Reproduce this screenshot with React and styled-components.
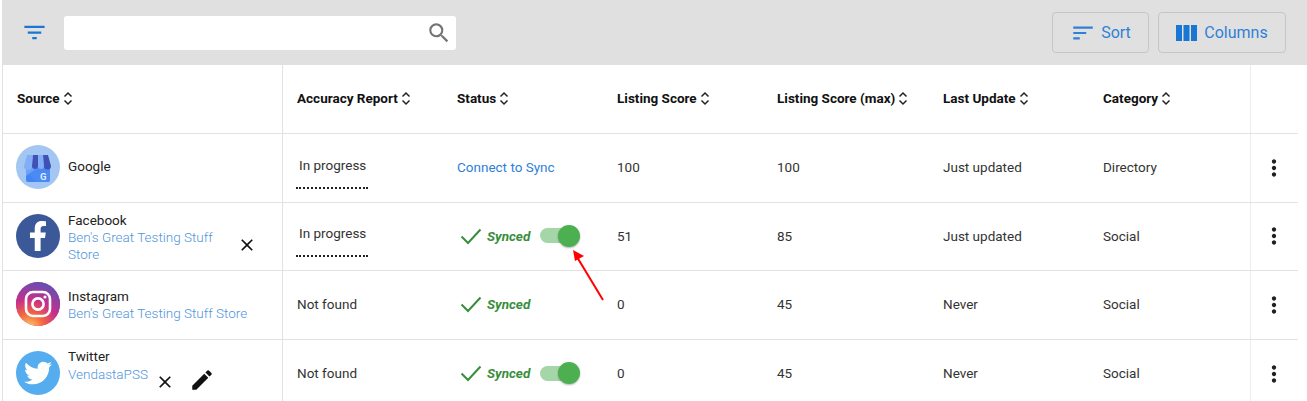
import React from "react";
import styled, { createGlobalStyle } from "styled-components";
import { MdFilterList, MdSearch, MdSort, MdClose, MdEdit, MdMoreVert } from "react-icons/md";
import { FaFacebookF, FaTwitter } from "react-icons/fa";

const GlobalStyle = createGlobalStyle`
  html, body {
    margin: 0;
    background: #fff;
    font-family: Roboto, "Liberation Sans", sans-serif;
    overflow: hidden;
  }
`;

const Page = styled.div`
  position: relative;
  width: 1307px;
  height: 401px;
  overflow: hidden;
  padding-left: 2px;
  box-sizing: border-box;
`;

const Toolbar = styled.div`
  height: 65px;
  background: #e0e0e0;
  display: flex;
  align-items: center;
  padding: 0 21px 0 19px;
  box-sizing: border-box;
`;

const FilterButton = styled.div`
  display: flex;
  color: #1976d2;
  font-size: 27px;
  margin-right: 16px;
`;

const SearchBox = styled.div`
  width: 392px;
  height: 34px;
  margin-top: 1px;
  background: #fff;
  border-radius: 3px;
  display: flex;
  align-items: center;
  justify-content: flex-end;
  padding-right: 4px;
  box-sizing: border-box;
  color: #757575;
  font-size: 26px;
`;

const Spacer = styled.div`
  flex: 1;
`;

const ToolButton = styled.div`
  height: 41px;
  width: ${(p) => p.$width}px;
  margin-left: 9px;
  border: 1px solid #c6c6c6;
  border-radius: 4px;
  box-sizing: border-box;
  display: flex;
  align-items: center;
  justify-content: center;
  gap: ${(p) => p.$gap}px;
  color: #2f80d8;
  font-size: 16px;
  svg {
    flex: none;
  }
`;

const Table = styled.div`
  width: 1295px;
  border-left: 1px solid #e2e2e2;
`;

const Row = styled.div`
  display: grid;
  grid-template-columns: 280px 160px 160px 160px 166px 160px 161px 47px;
  height: ${(p) => p.$height}px;
  border-bottom: 1px solid #e2e2e2;
  box-sizing: border-box;
`;

const Cell = styled.div`
  display: flex;
  align-items: center;
  padding: 0 0 2px 14px;
  font-size: 13.5px;
  color: #333;
  min-width: 0;
`;

const HeadCell = styled(Cell)`
  font-weight: 700;
  color: #111;
  gap: 3px;
`;

const SourceCell = styled(Cell)`
  border-right: 1px solid #e2e2e2;
  padding-left: 13px;
  position: relative;
`;

const HeadSourceCell = styled(HeadCell)`
  border-right: 1px solid #e2e2e2;
`;

const ActionCell = styled.div`
  border-left: 1px solid #ececec;
  display: flex;
  align-items: center;
  padding: 0 0 1px 10px;
  font-size: 26px;
  color: #212121;
`;

const Avatar = styled.div`
  width: 44px;
  height: 44px;
  flex: none;
  border-radius: 50%;
  overflow: hidden;
  display: flex;
  align-items: center;
  justify-content: center;
  background: ${(p) => p.$bg};
  color: #fff;
  margin-right: 8px;
`;

const SourceText = styled.div`
  width: ${(p) => p.$width}px;
  line-height: 17px;
  padding-top: ${(p) => p.$top}px;
  padding-bottom: ${(p) => p.$bottom}px;
`;

const SourceName = styled.div`
  font-size: 13.5px;
  color: #222;
  margin-bottom: 0.5px;
`;

const SourceAccount = styled.div`
  font-size: 13.5px;
  font-weight: 300;
  color: #4f95dc;
  line-height: 16.5px;
`;

const IconAction = styled.span`
  position: absolute;
  left: ${(p) => p.$left}px;
  top: ${(p) => p.$top}px;
  display: flex;
  color: #111;
  font-size: ${(p) => p.$size}px;
`;

const Progress = styled.div`
  border-bottom: 2px dotted #222;
  width: 72px;
  padding: 0 0 14px 3px;
  box-sizing: border-box;
  margin-left: -1px;
  margin-top: 11px;
`;

const Link = styled.span`
  color: #2f80d8;
`;

const Synced = styled.div`
  display: flex;
  align-items: center;
  color: #388e3c;
  font-style: italic;
  font-weight: 700;
  font-size: 13.5px;
  gap: 5px;
  padding-left: 3px;
`;

const Toggle = styled.div`
  position: relative;
  width: 36px;
  height: 15px;
  border-radius: 8px;
  background: #a5d6a7;
  margin-left: 5px;
  &::after {
    content: "";
    position: absolute;
    right: -4px;
    top: -3.5px;
    width: 22px;
    height: 22px;
    border-radius: 50%;
    background: #4caf50;
    box-shadow: 0 1px 2px rgba(0, 0, 0, 0.3);
  }
`;

const Arrow = styled.svg`
  position: absolute;
  left: 570px;
  top: 247px;
`;

const SortArrows = () => (
  <svg width="10" height="15" viewBox="0 0 10 15" fill="none" stroke="#222" strokeWidth="1.5">
    <path d="M1.5 5.5 5 2l3.5 3.5M1.5 9.5 5 13l3.5-3.5" />
  </svg>
);

const Check = () => (
  <svg width="22" height="18" viewBox="0 0 22 18" fill="none" stroke="#388e3c" strokeWidth="2">
    <path d="M1.5 9.5 8 16 20.5 2.500" />
  </svg>
);

const ColumnsIcon = () => (
  <svg width="21" height="16" viewBox="0 0 21 16" fill="#1976d2">
    <path d="M0 0h6v16H0zM7.500 0h6v16h-6zM15 0h6v16h-6z" />
  </svg>
);

const GoogleLogo = () => (
  <svg width="44" height="44" viewBox="0 0 44 44">
    <path d="M10 21h24v14a2 2 0 0 1-2 2H12a2 2 0 0 1-2-2z" fill="#4285f4" />
    <path d="M10 26 21 37h11l2-2V21H12z" fill="#4a8af4" />
    <path d="M10 21h14L10 31z" fill="#6ba1f7" />
    <path d="M11 10h6l-1 11a4 4 0 0 1-8 0z" fill="#82aef5" />
    <path d="M17 10h5v11a3 3 0 0 1-6 0z" fill="#3f51b5" />
    <path d="M22 10h5l1 11a3 3 0 0 1-6 0z" fill="#82aef5" />
    <path d="M27 10h5l3 11a3.500 3.500 0 0 1-7 0z" fill="#3f51b5" />
    <text x="24" y="35" fontSize="9.500" fontWeight="700" fill="#e3ecfc" fontFamily="Roboto, sans-serif">G</text>
  </svg>
);

const InstagramLogo = () => (
  <svg width="44" height="44" viewBox="0 0 44 44">
    <defs>
      <radialGradient id="ig" cx="30%" cy="105%" r="110%">
        <stop offset="0" stopColor="#fdd26e" />
        <stop offset="0.3" stopColor="#f5683c" />
        <stop offset="0.6" stopColor="#c72f8a" />
        <stop offset="1" stopColor="#5b51b8" />
      </radialGradient>
    </defs>
    <rect width="44" height="44" fill="url(#ig)" />
    <rect x="10" y="10" width="24" height="24" rx="7" fill="none" stroke="#fff" strokeWidth="2.6" />
    <circle cx="22" cy="22" r="5.6" fill="none" stroke="#fff" strokeWidth="2.6" />
    <circle cx="29" cy="15" r="1.6" fill="#fff" />
  </svg>
);

const headers = ["Accuracy Report", "Status", "Listing Score", "Listing Score (max)", "Last Update", "Category"];

const Status = ({ kind }) => {
  if (kind === "connect") return <Link>Connect to Sync</Link>;
  return (
    <Synced>
      <Check />
      Synced
      {kind === "toggle" && <Toggle />}
    </Synced>
  );
};

const rows = [
  { height: 69, name: "Google", logo: <Avatar $bg="#a3c6f2"><GoogleLogo /></Avatar>, progress: true, status: "connect", score: 100, max: 100, update: "Just updated", category: "Directory" },
  {
    height: 68, name: "Facebook", account: "Ben's Great Testing Stuff Store", textWidth: 155, top: 3,
    logo: <Avatar $bg="#3b5998"><FaFacebookF size={30} /></Avatar>,
    actions: <IconAction $left={234} $top={32} $size={20}><MdClose /></IconAction>,
    progress: true, status: "toggle", score: 51, max: 85, update: "Just updated", category: "Social",
  },
  {
    height: 69, name: "Instagram", account: "Ben's Great Testing Stuff Store", textWidth: 200, top: 1,
    logo: <Avatar $bg="#c72f8a"><InstagramLogo /></Avatar>,
    report: "Not found", status: "synced", score: 0, max: 45, update: "Never", category: "Social",
  },
  {
    height: 69, name: "Twitter", account: "VendastaPSS", textWidth: 155, bottom: 16,
    logo: <Avatar $bg="#55acee"><FaTwitter size={28} /></Avatar>,
    actions: (
      <>
        <IconAction $left={152} $top={32} $size={20}><MdClose /></IconAction>
        <IconAction $left={186} $top={27} $size={26}><MdEdit /></IconAction>
      </>
    ),
    report: "Not found", status: "toggle", score: 0, max: 45, update: "Never", category: "Social",
  },
];

export default function App() {
  return (
    <Page>
      <GlobalStyle />
      <Toolbar>
        <FilterButton><MdFilterList /></FilterButton>
        <SearchBox><MdSearch /></SearchBox>
        <Spacer />
        <ToolButton $width={97} $gap={5}><MdSort size={26} />Sort</ToolButton>
        <ToolButton $width={128} $gap={7}><ColumnsIcon />Columns</ToolButton>
      </Toolbar>
      <Table>
        <Row $height={69}>
          <HeadSourceCell>Source <SortArrows /></HeadSourceCell>
          {headers.map((h) => (
            <HeadCell key={h}>{h} <SortArrows /></HeadCell>
          ))}
          <ActionCell />
        </Row>
        {rows.map((r) => (
          <Row key={r.name} $height={r.height}>
            <SourceCell>
              {r.logo}
              <SourceText $width={r.textWidth || 155} $top={r.top || 0} $bottom={r.bottom || 0}>
                <SourceName>{r.name}</SourceName>
                {r.account && <SourceAccount>{r.account}</SourceAccount>}
              </SourceText>
              {r.actions}
            </SourceCell>
            <Cell>{r.progress ? <Progress>In progress</Progress> : r.report}</Cell>
            <Cell><Status kind={r.status} /></Cell>
            <Cell>{r.score}</Cell>
            <Cell>{r.max}</Cell>
            <Cell>{r.update}</Cell>
            <Cell>{r.category}</Cell>
            <ActionCell><MdMoreVert /></ActionCell>
          </Row>
        ))}
      </Table>
      <Arrow width="40" height="62" viewBox="0 0 40 62">
        <path d="M33 53 7 10" stroke="#f00" strokeWidth="2" fill="none" />
        <path d="M3 3 14 9 5 14z" fill="#f00" />
      </Arrow>
    </Page>
  );
}
